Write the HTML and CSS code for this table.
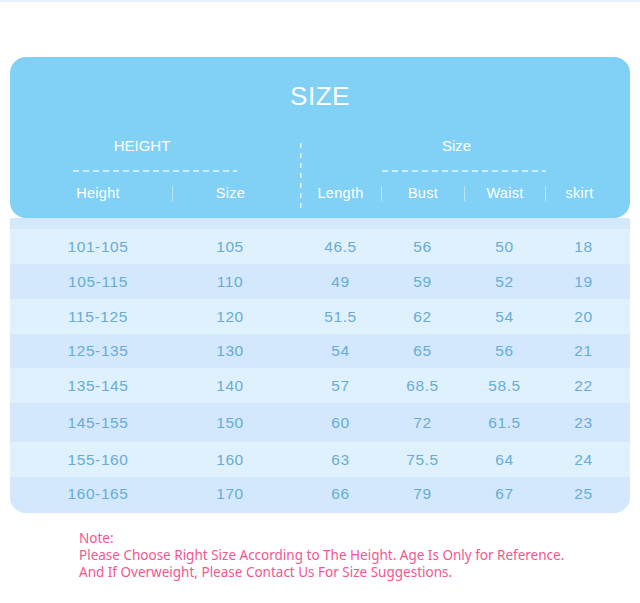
FILE: index.html
```html
<!DOCTYPE html>
<html lang="en">
<head>
<meta charset="utf-8">
<title>Size Chart</title>
<link rel="stylesheet" href="styles.css">
</head>
<body>
<div class="topline"></div>
<main class="chart">
  <section class="head">
    <h1 class="title">SIZE</h1>
    <div class="groups">
      <div class="group group-left">
        <div class="group-label">HEIGHT</div>
        <div class="dash"></div>
        <div class="cols cols-left">
          <div class="col c1">Height</div>
          <div class="col c2 sep">Size</div>
        </div>
      </div>
      <div class="group group-right">
        <div class="group-label label-right">Size</div>
        <div class="dash"></div>
        <div class="cols cols-right">
          <div class="col c3">Length</div>
          <div class="col c4 sep">Bust</div>
          <div class="col c5 sep">Waist</div>
          <div class="col c6 sep">skirt</div>
        </div>
      </div>
    </div>
  </section>
  <section class="body">
    <div class="strip"></div>
    <div class="row light"><span class="c1">101-105</span><span class="c2">105</span><span>46.5</span><span>56</span><span>50</span><span class="c6">18</span></div>
    <div class="row dark"><span class="c1">105-115</span><span class="c2">110</span><span>49</span><span>59</span><span>52</span><span class="c6">19</span></div>
    <div class="row light"><span class="c1">115-125</span><span class="c2">120</span><span>51.5</span><span>62</span><span>54</span><span class="c6">20</span></div>
    <div class="row dark short"><span class="c1">125-135</span><span class="c2">130</span><span>54</span><span>65</span><span>56</span><span class="c6">21</span></div>
    <div class="row light"><span class="c1">135-145</span><span class="c2">140</span><span>57</span><span>68.5</span><span>58.5</span><span class="c6">22</span></div>
    <div class="row dark tall"><span class="c1">145-155</span><span class="c2">150</span><span>60</span><span>72</span><span>61.5</span><span class="c6">23</span></div>
    <div class="row light"><span class="c1">155-160</span><span class="c2">160</span><span>63</span><span>75.5</span><span>64</span><span class="c6">24</span></div>
    <div class="row dark last"><span class="c1">160-165</span><span class="c2">170</span><span>66</span><span>79</span><span>67</span><span class="c6">25</span></div>
  </section>
  <section class="note">
    <p>Note:</p>
    <p>Please Choose Right Size According to The Height. Age Is Only for Reference.</p>
    <p>And If Overweight, Please Contact Us For Size Suggestions.</p>
  </section>
</main>
</body>
</html>
```

FILE: styles.css
```css
* { box-sizing: border-box; margin: 0; padding: 0; }

html, body {
  width: 640px;
  height: 603px;
  background: #ffffff;
  overflow: hidden;
}

body {
  font-family: "Liberation Sans", Arial, sans-serif;
}

.topline {
  height: 2px;
  background: #e4f1fb;
}

.chart {
  margin: 55px 10px 0 10px;
  width: 620px;
}

/* ---------- header card ---------- */
.head {
  background: #81d0f5;
  border-radius: 16px;
  height: 161px;
  padding-top: 20px;
  color: #ffffff;
}

.title {
  font-weight: normal;
  font-size: 26px;
  line-height: 38px;
  height: 38px;
  text-align: center;
  letter-spacing: 0.5px;
}

.groups {
  display: grid;
  grid-template-columns: 290px 330px;
  margin-top: 22px;
}

.group {
  display: flex;
  flex-direction: column;
}

.group-right {
  background-image: repeating-linear-gradient(to bottom,
      rgba(255, 255, 255, 0.75) 0 5px,
      transparent 5px 10px);
  background-size: 1.5px calc(100% - 6px);
  background-repeat: no-repeat;
  background-position: left bottom;
  padding-bottom: 8px;
}

.group-label {
  font-size: 15px;
  line-height: 18px;
  height: 18px;
  text-align: center;
}

.group-left .group-label {
  padding-right: 26px;
}

.label-right {
  padding-right: 17px;
}

.dash {
  height: 1.5px;
  width: 164px;
  align-self: center;
  margin-top: 15px;
  background-image: repeating-linear-gradient(to right,
      rgba(255, 255, 255, 0.6) 0 6px,
      transparent 6px 10px);
}

.group-right .dash {
  margin-left: -2px;
}

.cols {
  display: grid;
  margin-top: 14px;
}

.cols-left {
  grid-template-columns: 162px 128px;
}

.cols-right {
  grid-template-columns: 81px 83px 81px 85px;
}

.col {
  font-size: 14.5px;
  line-height: 15px;
  height: 15px;
  text-align: center;
  letter-spacing: 0.3px;
}

.sep {
  border-left: 1px solid rgba(255, 255, 255, 0.45);
}

.c1 { padding-left: 14px; }
.c2 { padding-right: 12px; }
.col.c6 { padding-right: 17px; }

/* ---------- body ---------- */
.body {
  border-radius: 0 0 16px 16px;
  overflow: hidden;
  background: #d3e9fc;
}

.strip {
  height: 11px;
  background: #d4eafc;
}

.row {
  display: grid;
  grid-template-columns: 162px 128px 81px 83px 81px 85px;
  align-items: center;
  height: 35px;
  color: #68acd4;
  font-size: 15.5px;
  letter-spacing: 0.6px;
  text-align: center;
}

.row.short { height: 34px; }
.row.tall { height: 39px; }
.row.last { height: 36px; padding-bottom: 2px; }

.row.light { background: #e0f1fe; }
.row.dark { background: #d3e8fc; }

.row .c6 { padding-right: 8px; }

/* ---------- note ---------- */
.note {
  margin-top: 17px;
  padding-left: 69px;
  color: #f4568f;
  font-family: "Noto Sans", "Open Sans", sans-serif;
  font-size: 13.5px;
  line-height: 17px;
}
```
